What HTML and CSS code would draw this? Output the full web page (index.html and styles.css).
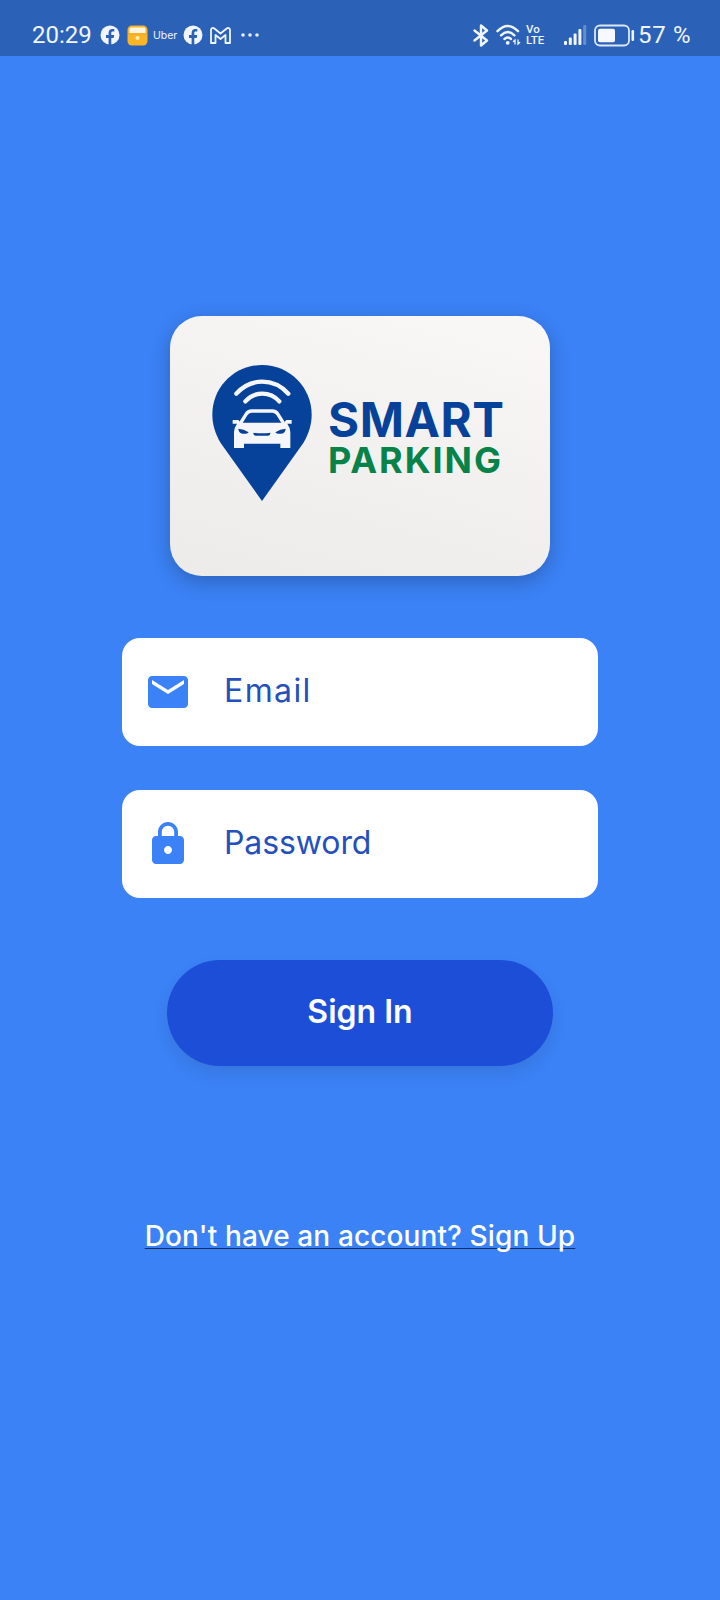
FILE: index.html
```html
<!DOCTYPE html>
<html lang="en">
<head>
<meta charset="utf-8">
<title>Smart Parking</title>
<link rel="stylesheet" href="styles.css">
</head>
<body>
<header class="status">
  <div class="status-left">
    <span class="clock">20:29</span>
    <svg class="fb" width="20" height="20" viewBox="0 0 20 20"><circle cx="10" cy="10" r="9.5" fill="#f0f5ff"/><path d="M8.600 20v-7H6V10h2.600V8C8.600 5.300 10 4 12.300 4h2v2.600h-1.500c-1.100 0-1.500.5-1.500 1.500V10h2.900l-.5 3h-2.400v7z" fill="#2b62b8"/></svg>
    <svg class="app" width="21" height="21" viewBox="0 0 21 21"><rect x=".5" y=".5" width="20" height="20" rx="4.5" fill="#f9b524"/><path d="M2.500 4q0-1.500 1.500-1.500h13Q18.500 2.500 18.500 4v4h-16z" fill="#fff6e2"/><path d="M1 9h19" stroke="#f3a52a"/><circle cx="10.500" cy="13" r="2" fill="#fff0c0"/></svg>
    <span class="uber">Uber</span>
    <svg class="fb fb-second" width="20" height="20" viewBox="0 0 20 20"><circle cx="10" cy="10" r="9.5" fill="#f0f5ff"/><path d="M8.600 20v-7H6V10h2.600V8C8.600 5.300 10 4 12.300 4h2v2.600h-1.500c-1.100 0-1.500.5-1.500 1.500V10h2.900l-.5 3h-2.400v7z" fill="#2b62b8"/></svg>
    <svg class="mail-app" width="21" height="17" viewBox="0 0 21 17" fill="none" stroke="#f0f5ff" stroke-width="1.800" stroke-linejoin="round"><path d="M1 16V3C1 .8 3 .5 4.300 1.500l6.200 5 6.200-5C18 .5 20 .8 20 3v13h-4.500V8l-5 4-5-4v8z"/></svg>
    <svg class="dots" width="18" height="4" viewBox="0 0 18 4" fill="#e4edfc"><circle cx="2" cy="2" r="1.800"/><circle cx="9" cy="2" r="1.800"/><circle cx="16" cy="2" r="1.800"/></svg>
  </div>
  <div class="status-right">
    <svg width="16" height="23" viewBox="0 0 16 23" fill="none" stroke="#f0f5ff" stroke-width="2.400" stroke-linejoin="round" stroke-linecap="round"><path d="M1.500 6.500l12.500 10-6 5V1.500l6 5-12.500 10"/></svg>
    <svg class="wifi" width="26" height="22" viewBox="0 0 26 22" fill="none" stroke="#f0f5ff" stroke-width="2.400" stroke-linecap="round"><path d="M1.500 7.200q10-10.400 20.500 0M5 11.300q6.700-6.600 13.400 0M8.500 15q3.300-3 6.500 0"/><circle cx="11.700" cy="18.800" r="1.900" fill="#f0f5ff" stroke="none"/><path d="M19 20v-4l-1.600 1.500M22 16v4l1.700-1.500" stroke-width="1.300"/></svg>
    <span class="volte"><span>Vo</span><span>LTE</span></span>
    <svg class="signal" width="23" height="20" viewBox="0 0 23 20" fill="#f0f5ff"><rect x="0" y="16" width="3" height="4" rx="1"/><rect x="4.800" y="12.500" width="3" height="7.500" rx="1"/><rect x="9.600" y="8.500" width="3" height="11.500" rx="1"/><rect x="14.400" y="4" width="3" height="16" rx="1"/><rect x="19.200" y="0" width="3" height="20" rx="1" opacity=".3"/></svg>
    <svg class="battery" width="41" height="23" viewBox="0 0 41 23"><rect x="1" y="1.500" width="34" height="20" rx="5" fill="none" stroke="#dce7fa" stroke-width="1.800"/><rect x="4" y="4.700" width="17" height="13.600" rx="2" fill="#f6f9ff"/><rect x="37.500" y="6" width="2.600" height="11" rx="1.200" fill="#f0f5ff"/></svg>
    <span class="percent">57 %</span>
  </div>
</header>
<main class="login">
  <svg class="logo" width="380" height="260" viewBox="0 0 380 260" role="img" aria-label="Smart Parking">
    <g transform="translate(30 39) scale(.33333)">
      <path d="M186 438L62 264C45 234 37 208 37 179C37 96 104 30 186 30S335 96 335 179C335 208 327 234 310 264Z" fill="#07429a"/>
      <g fill="none" stroke="#f5f6f9" stroke-linecap="round">
        <path d="M109 116C152 68 221 68 265 116" stroke-width="13"/>
        <path d="M136 139C164 108 210 108 238 139" stroke-width="13"/>
        <path d="M120 207L138 178Q144 168 155 168H217Q228 168 234 178L252 207" stroke-width="10"/>
      </g>
      <path d="M98 195h17l7 8h130l7-8h16v11h-13q9 13 9 25v48h-30v-13H132v13H102v-48q0-12 9-25H98z" fill="#f5f6f9"/>
      <path d="M115 221q16 1 31 11-3 4-8 4h-10q-12-2-13-15zM257 221q-16 1-31 11 3 4 8 4h10q12-2 13-15zM160 233q26 4 51 0 0 9-8 9h-35q-8 0-8-9z" fill="#07429a"/>
    </g>
    <text class="word-smart" x="158" y="121" textLength="176">SMART</text>
    <text class="word-parking" x="158" y="157" textLength="173">PARKING</text>
  </svg>
  <label class="field">
    <svg class="field-icon" width="48" height="48" viewBox="0 0 24 24" fill="#3b82f6"><path d="M20 4H4c-1.100 0-2 .9-2 2v12c0 1.100.9 2 2 2h16c1.100 0 2-.9 2-2V6c0-1.100-.9-2-2-2zm0 4l-8 5-8-5V6l8 5 8-5v2z"/></svg>
    <span class="field-text email">Email</span>
  </label>
  <label class="field">
    <svg class="field-icon" width="48" height="48" viewBox="0 0 24 24" fill="#3b82f6"><path d="M18 8h-1V6c0-2.760-2.240-5-5-5S7 3.240 7 6v2H6c-1.100 0-2 .9-2 2v10c0 1.100.9 2 2 2h12c1.100 0 2-.9 2-2V10c0-1.100-.9-2-2-2zm-6 9c-1.100 0-2-.9-2-2s.9-2 2-2 2 .9 2 2-.9 2-2 2zm3.100-9H8.900V6c0-1.710 1.390-3.100 3.100-3.100s3.100 1.390 3.100 3.100v2z"/></svg>
    <span class="field-text password">Password</span>
  </label>
  <button class="sign-in" type="button"><span>Sign In</span></button>
  <a class="sign-up">Don't have an account? Sign Up</a>
</main>
</body>
</html>
```

FILE: styles.css
```css
* { box-sizing: border-box; }
body {
  margin: 0;
  height: 1600px;
  background: #3b82f6;
  font-family: Inter, "Open Sans", sans-serif;
  overflow: hidden;
}
.status {
  height: 56px;
  padding: 14px 28px 0 32px;
  display: flex;
  justify-content: space-between;
  background: #2b62b8;
  color: #f0f5ff;
}
.status-left, .status-right { display: flex; align-items: center; height: 42px; }
.clock {
  width: 59px;
  margin-right: 9px;
  font: 24px/42px Roboto, sans-serif;
  white-space: nowrap;
}
.app { margin-left: 7px; }
.uber {
  width: 24px;
  margin-left: 5px;
  padding-top: 2px;
  font: 10.500px/20px Inter, sans-serif;
}
.fb-second { margin-left: 6px; }
.mail-app { margin-left: 7px; }
.dots { margin-left: 10px; }
.wifi { margin-left: 7px; }
.volte {
  width: 20px;
  margin-left: 4px;
  display: flex;
  flex-direction: column;
  font: 500 11.500px/11px Roboto, sans-serif;
}
.signal { margin-left: 18px; }
.battery { margin-left: 7px; }
.percent {
  width: 54px;
  margin-left: 3px;
  font: 24px/42px Roboto, sans-serif;
  letter-spacing: .7px;
  white-space: nowrap;
}
.login {
  padding-top: 260px;
  display: flex;
  flex-direction: column;
  align-items: center;
}
.logo {
  margin-bottom: 62px;
  border-radius: 32px;
  background: linear-gradient(195deg, #f9f8f7, #f2f1f0 50%, #ecebea);
  box-shadow: 0 6px 20px rgba(0, 0, 0, .24);
}
.word-smart { font: 700 47.500px Inter, sans-serif; fill: #07429a; }
.word-parking { font: 700 36px Inter, sans-serif; fill: #078248; }
.field {
  width: 476px;
  height: 108px;
  margin-bottom: 44px;
  padding-left: 22px;
  display: flex;
  align-items: center;
  border-radius: 18px;
  background: #fff;
}
.field-text {
  margin-left: 32px;
  padding-bottom: 2px;
  color: #2450bd;
  font-size: 32px;
  font-weight: 400;
  line-height: 40px;
}
.email { letter-spacing: 1.400px; }
.password { letter-spacing: -.1px; }
.sign-in {
  width: 386px;
  height: 106px;
  margin-top: 18px;
  padding: 0 0 2px;
  border: 0;
  border-radius: 53px;
  background: #1d4ed8;
  box-shadow: 0 8px 16px rgba(0, 0, 0, .09);
  color: #fff;
  font: 600 32px/40px Inter, sans-serif;
}
.sign-up {
  margin-top: 150px;
  color: #fff;
  font-size: 28px;
  font-weight: 500;
  line-height: 40px;
  letter-spacing: .12px;
  text-decoration: underline 1px #12305f;
  text-underline-offset: 2px;
  text-decoration-skip-ink: none;
}
```
